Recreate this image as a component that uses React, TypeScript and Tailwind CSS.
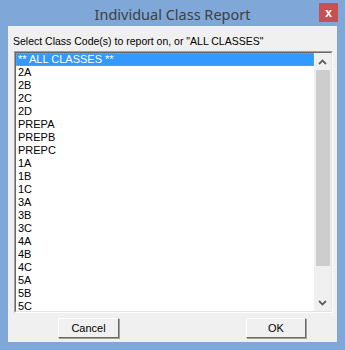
import React from 'react';

const classCodes = [
    '** ALL CLASSES **',
    '2A', '2B', '2C', '2D',
    'PREPA', 'PREPB', 'PREPC',
    '1A', '1B', '1C',
    '3A', '3B', '3C',
    '4A', '4B', '4C',
    '5A', '5B', '5C',
];

const ChevronUp = () => (
    <svg width="9" height="6" viewBox="0 0 9 6">
        <path d="M1 5 L4.5 1.5 L8 5" fill="none" stroke="#606060" strokeWidth="1.8" />
    </svg>
);

const ChevronDown = () => (
    <svg width="9" height="6" viewBox="0 0 9 6">
        <path d="M1 1 L4.5 4.5 L8 1" fill="none" stroke="#606060" strokeWidth="1.8" />
    </svg>
);

const DialogButton: React.FC<{ label: string; width: string }> = ({ label, width }) => (
    <button
        className={`${width} h-[20px] bg-[#f0f0f0] border border-t-white border-l-white border-r-[#696969] border-b-[#696969] shadow-[1px_1px_0_#a0a0a0] flex items-center justify-center text-[11px] text-black leading-none`}
    >
        {label}
    </button>
);

export default function App() {
    return (
        <div
            className="w-[345px] h-[350px] bg-[#7fa8d8] flex flex-col"
            style={{ fontFamily: '"Liberation Sans", Arial, sans-serif' }}
        >
            {/* title bar */}
            <div className="h-[26px] flex items-start">
                <div className="w-[26px]" />
                <div
                    className="flex-1 text-center text-[14.5px] text-[#404040] leading-[28px]"
                    style={{ fontFamily: '"Noto Sans", "Open Sans", sans-serif' }}
                >
                    Individual Class Report
                </div>
                <div className="w-[26px] pt-[3px] flex">
                    <div className="w-[19px] h-[19px] bg-[#c75050] flex items-center justify-center text-white text-[12px] font-bold leading-none">
                        x
                    </div>
                </div>
            </div>

            {/* client area */}
            <div className="mx-[8px] mb-[8px] flex-1 bg-[#f0f0f0] flex flex-col pl-[5px] pr-[4px]">
                <div className="text-[10.5px] text-black leading-none pt-[10px] h-[25px]">
                    Select Class Code(s) to report on, or "ALL CLASSES"
                </div>

                {/* list box */}
                <div className="ml-[1px] h-[262px] flex border-t border-l border-t-[#a0a0a0] border-l-[#a0a0a0] border-b border-r border-b-white border-r-white">
                    <div className="flex-1 flex border-t border-l border-t-[#696969] border-l-[#696969] border-b border-r border-b-[#e3e3e3] border-r-[#e3e3e3] bg-white">
                        <div className="flex-1 flex flex-col overflow-hidden">
                            {classCodes.map((code, i) =>
                                i === 0 ? (
                                    <div
                                        key={code}
                                        className="h-[13px] bg-[#3399ff] text-white text-[11px] leading-[11px] pl-[1px] border border-dotted border-[#e08a3c] shrink-0"
                                    >
                                        {code}
                                    </div>
                                ) : (
                                    <div key={code} className="h-[13px] text-black text-[11px] leading-[13px] pl-[2px] shrink-0">
                                        {code}
                                    </div>
                                )
                            )}
                        </div>

                        {/* scrollbar */}
                        <div className="w-[17px] bg-[#f0f0f0] flex flex-col items-center">
                            <div className="h-[17px] flex items-center justify-center">
                                <ChevronUp />
                            </div>
                            <div className="w-[14px] h-[196px] bg-[#cdcdcd] ml-[1px]" />
                            <div className="flex-1" />
                            <div className="h-[17px] flex items-center justify-center">
                                <ChevronDown />
                            </div>
                        </div>
                    </div>
                </div>

                {/* buttons */}
                <div className="flex pt-[5px] pl-[45px] gap-[127px]">
                    <DialogButton label="Cancel" width="w-[61px]" />
                    <DialogButton label="OK" width="w-[60px]" />
                </div>
            </div>
        </div>
    );
}
